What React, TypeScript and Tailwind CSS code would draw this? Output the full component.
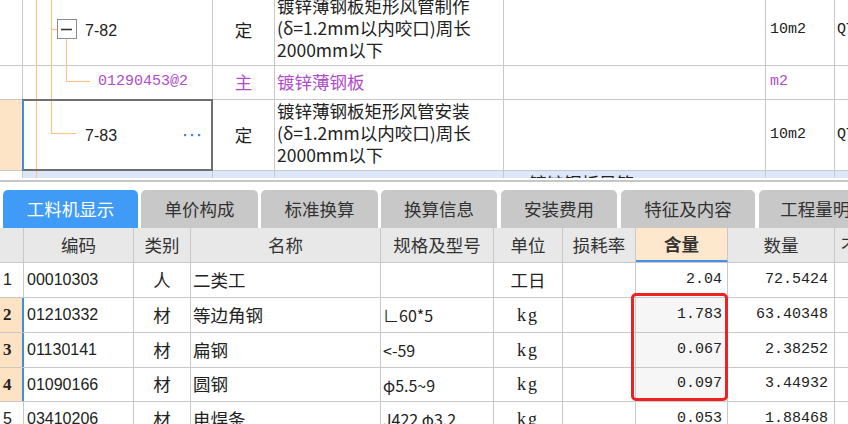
import React from "react";

const CJK = "font-['Noto_Sans_CJK_SC',sans-serif]";
const MONO = "font-['Liberation_Mono','Noto_Sans_CJK_SC',monospace]";
const SANS = "font-['Liberation_Sans','Noto_Sans_CJK_SC',sans-serif]";

const headers = [
  { w: "w-[24px]", t: "" },
  { w: "w-[110px]", t: "编码" },
  { w: "w-[57px]", t: "类别" },
  { w: "w-[190px]", t: "名称" },
  { w: "w-[113px]", t: "规格及型号" },
  { w: "w-[69px]", t: "单位" },
  { w: "w-[73px]", t: "损耗率" },
  { w: "w-[92px]", t: "含量" },
  { w: "w-[107px]", t: "数量" },
];

const rows = [
  { n: "1", code: "00010303", cat: "人", name: "二类工", spec: "", unit: "工日", loss: "", qty: "2.04", amt: "72.5424", sel: false, h: "h-[35px]" },
  { n: "2", code: "01210332", cat: "材", name: "等边角钢", spec: "∟60*5", unit: "kg", loss: "", qty: "1.783", amt: "63.40348", sel: true, h: "h-[35px]" },
  { n: "3", code: "01130141", cat: "材", name: "扁钢", spec: "<-59", unit: "kg", loss: "", qty: "0.067", amt: "2.38252", sel: true, h: "h-[35px]" },
  { n: "4", code: "01090166", cat: "材", name: "圆钢", spec: "φ5.5~9", unit: "kg", loss: "", qty: "0.097", amt: "3.44932", sel: true, h: "h-[34px]" },
  { n: "5", code: "03410206", cat: "材", name: "电焊条", spec: "J422 φ3.2", unit: "kg", loss: "", qty: "0.053", amt: "1.88468", sel: false, h: "h-[35px]" },
];

const tabs = [
  { t: "工料机显示", w: "w-[135px]", ml: "ml-[3px]", active: true },
  { t: "单价构成", w: "w-[117px]", ml: "ml-[3px]", active: false },
  { t: "标准换算", w: "w-[117px]", ml: "ml-[3px]", active: false },
  { t: "换算信息", w: "w-[116px]", ml: "ml-[3px]", active: false },
  { t: "安装费用", w: "w-[116px]", ml: "ml-[4px]", active: false },
  { t: "特征及内容", w: "w-[134px]", ml: "ml-[4px]", active: false },
  { t: "工程量明细", w: "w-[130px]", ml: "ml-[4px]", active: false },
];

const cell = "shrink-0 h-full border-r border-[#c8c8c8] flex items-center overflow-hidden whitespace-nowrap";

function TopGrid() {
  const line = "text-[17.5px] leading-[22px] text-[#222] whitespace-nowrap";
  return (
    <div className="relative h-[178px] overflow-hidden">
      <div className="-mt-[5px]">
        {/* Row 1 */}
        <div className="flex h-[71px] border-b border-[#c8c8c8]">
          <div className={`${cell} w-[23px] bg-white`} />
          <div className={`${cell} w-[190px] pl-[62px] pt-[1px]`}>
            <span className={`${SANS} text-[16px] text-[#222]`}>7-82</span>
          </div>
          <div className={`${cell} w-[62px] justify-center`}>
            <span className={`${CJK} text-[17.5px] text-[#222]`}>定</span>
          </div>
          <div className={`${cell} w-[229px] pl-[2px] pb-[5px] flex-col !items-start justify-center ${CJK}`}>
            <div className={line}>镀锌薄钢板矩形风管制作</div>
            <div className={line}>(δ=1.2mm以内咬口)周长</div>
            <div className={line}>2000mm以下</div>
          </div>
          <div className={`${cell} w-[262px]`} />
          <div className={`${cell} w-[69px] pl-[4px]`}>
            <span className={`${MONO} text-[15px] text-[#222]`}>10m2</span>
          </div>
          <div className={`${cell} flex-1 pl-[2px] border-r-0`}>
            <span className={`${MONO} text-[15px] text-[#222]`}>QT</span>
          </div>
        </div>
        {/* Row 2 */}
        <div className="flex h-[34px] border-b border-[#c8c8c8]">
          <div className={`${cell} w-[23px] bg-white`} />
          <div className={`${cell} w-[190px] pl-[75px]`}>
            <span className={`${MONO} text-[15px] text-[#b04cc8]`}>01290453@2</span>
          </div>
          <div className={`${cell} w-[62px] justify-center`}>
            <span className={`${CJK} text-[17.5px] text-[#b04cc8]`}>主</span>
          </div>
          <div className={`${cell} w-[229px] pl-[2px]`}>
            <span className={`${CJK} text-[17.5px] text-[#b04cc8]`}>镀锌薄钢板</span>
          </div>
          <div className={`${cell} w-[262px]`} />
          <div className={`${cell} w-[69px] pl-[4px]`}>
            <span className={`${MONO} text-[15px] text-[#b04cc8]`}>m2</span>
          </div>
          <div className={`${cell} flex-1 border-r-0`} />
        </div>
        {/* Row 3 */}
        <div className="flex h-[71px] border-b border-[#c8c8c8]">
          <div className={`${cell} w-[23px] bg-[#fde4c6]`} />
          <div className={`${cell} w-[190px] pl-[62px] pt-[1px]`}>
            <span className={`${SANS} text-[16px] text-[#222]`}>7-83</span>
          </div>
          <div className={`${cell} w-[62px] justify-center`}>
            <span className={`${CJK} text-[17.5px] text-[#222]`}>定</span>
          </div>
          <div className={`${cell} w-[229px] pl-[2px] pb-[5px] flex-col !items-start justify-center ${CJK}`}>
            <div className={line}>镀锌薄钢板矩形风管安装</div>
            <div className={line}>(δ=1.2mm以内咬口)周长</div>
            <div className={line}>2000mm以下</div>
          </div>
          <div className={`${cell} w-[262px]`} />
          <div className={`${cell} w-[69px] pl-[4px]`}>
            <span className={`${MONO} text-[15px] text-[#222]`}>10m2</span>
          </div>
          <div className={`${cell} flex-1 pl-[2px] border-r-0`}>
            <span className={`${MONO} text-[15px] text-[#222]`}>QT</span>
          </div>
        </div>
        {/* Row 4 partial */}
        <div className="flex h-[30px]">
          <div className={`${cell} w-[23px] bg-white`} />
          <div className={`${cell} w-[190px] bg-[#dce8fa]`} />
          <div className={`${cell} w-[62px] bg-[#dce8fa]`} />
          <div className={`${cell} w-[229px] bg-[#dce8fa]`} />
          <div className={`${cell} w-[262px] bg-[#dce8fa] !items-start pl-[19px] pt-[1px]`}>
            <span className={`${CJK} text-[17.5px] leading-[22px] text-[#222]`}>-镀锌钢板风管</span>
          </div>
          <div className={`${cell} w-[69px] bg-[#dce8fa]`} />
          <div className={`${cell} flex-1 bg-[#dce8fa] border-r-0`} />
        </div>
      </div>

      {/* tree lines */}
      <svg className="absolute left-0 top-0 pointer-events-none" width="220" height="178" viewBox="0 0 220 178">
        <g stroke="#f8c48a" strokeWidth="1.2" fill="none">
          <line x1="36.5" y1="0" x2="36.5" y2="178" />
          <line x1="51.5" y1="0" x2="51.5" y2="133.5" />
          <line x1="51" y1="29.5" x2="57" y2="29.5" />
          <line x1="66.5" y1="39" x2="66.5" y2="81.5" />
          <line x1="66" y1="81.5" x2="90" y2="81.5" />
          <line x1="51" y1="133.5" x2="76" y2="133.5" />
        </g>
        <rect x="57.5" y="19.5" width="19" height="19" fill="#fff" stroke="#8c8c8c" strokeWidth="1" />
        <line x1="61" y1="29.5" x2="72" y2="29.5" stroke="#333" strokeWidth="1.6" />
      </svg>

      {/* selected cell */}
      <div className="absolute left-[22px] top-[99px] w-[191px] h-[72px] border-2 border-[#6f6f6f] border-l-[#3a8ee6] pointer-events-none" />
      <svg className="absolute left-[183px] top-[133px]" width="20" height="4" viewBox="0 0 20 4">
        <rect x="1" y="1" width="2.2" height="2.2" fill="#3a8ee6" />
        <rect x="8" y="1" width="2.2" height="2.2" fill="#3a8ee6" />
        <rect x="15" y="1" width="2.2" height="2.2" fill="#3a8ee6" />
      </svg>
    </div>
  );
}

export default function App() {
  return (
    <div className={`relative w-[848px] h-[424px] overflow-hidden bg-white ${CJK}`}>
      <TopGrid />
      <div className="h-[2px] bg-white" />
      <div className="h-[2px] bg-[#c6c6c6]" />
      {/* tabs */}
      <div className="flex items-end h-[46px] pt-[8px] bg-white overflow-hidden">
        {tabs.map((tb) => (
          <div
            key={tb.t}
            className={`${tb.w} ${tb.ml} shrink-0 h-[38px] rounded-t-[5px] flex items-center justify-center whitespace-nowrap text-[17.5px] ${
              tb.active ? "bg-[#3f9bf6] text-white" : "bg-[#c8c8c8] text-[#333]"
            }`}
          >
            {tb.t}
          </div>
        ))}
      </div>
      {/* header */}
      <div className="flex h-[35px] border-b border-[#c8c8c8] bg-[#e8e8e8]">
        {headers.map((h) => (
          <div
            key={h.w + h.t}
            className={`${cell} ${h.w} justify-center text-[17.5px] text-[#333] ${
              h.t === "含量" ? "bg-[#fde8cd] font-bold text-[#222] border-b-2 border-b-[#4a90e2]" : ""
            }`}
          >
            {h.t}
          </div>
        ))}
        <div className={`${cell} flex-1 pl-[6px] border-r-0 text-[17.5px] text-[#333]`}>不含税</div>
      </div>
      {/* rows */}
      {rows.map((r) => (
        <div key={r.n} className={`flex ${r.h} border-b border-[#c8c8c8]`}>
          <div
            className={`${cell} w-[24px] pl-[3px] ${
              r.sel
                ? "bg-[#fde3c3] border-r-2 border-r-[#3a8ee6] font-['Liberation_Serif',serif] font-bold text-[17px] text-[#222]"
                : "bg-white font-['Liberation_Sans',sans-serif] text-[16px] text-[#222]"
            }`}
          >
            {r.n}
          </div>
          <div className={`${cell} w-[110px] pl-[3px] ${SANS} text-[16px] text-[#222]`}>{r.code}</div>
          <div className={`${cell} w-[57px] justify-center text-[17.5px] text-[#222]`}>{r.cat}</div>
          <div className={`${cell} w-[190px] pl-[2px] text-[17.5px] text-[#222]`}>{r.name}</div>
          <div className={`${cell} w-[113px] pl-[2px] ${CJK} text-[16px] text-[#222]`}>{r.spec}</div>
          <div
            className={`${cell} w-[69px] justify-center ${
              r.unit === "kg" ? "font-['Liberation_Serif',serif] text-[18px] tracking-[2px]" : "text-[17.5px]"
            } text-[#222]`}
          >
            {r.unit}
          </div>
          <div className={`${cell} w-[73px]`}>{r.loss}</div>
          <div className={`${cell} w-[92px] justify-end pr-[5px] ${MONO} text-[15px] text-[#222] ${r.sel ? "bg-[#f6f6f6]" : "bg-white"}`}>
            {r.qty}
          </div>
          <div className={`${cell} w-[107px] justify-end pr-[6px] ${MONO} text-[15px] text-[#222]`}>{r.amt}</div>
          <div className={`${cell} flex-1 border-r-0`} />
        </div>
      ))}
      {/* red highlight */}
      <div className="absolute left-[631px] top-[293px] w-[97px] h-[108px] border-[3px] border-[#ee2222] rounded-[5px] pointer-events-none" />
    </div>
  );
}
